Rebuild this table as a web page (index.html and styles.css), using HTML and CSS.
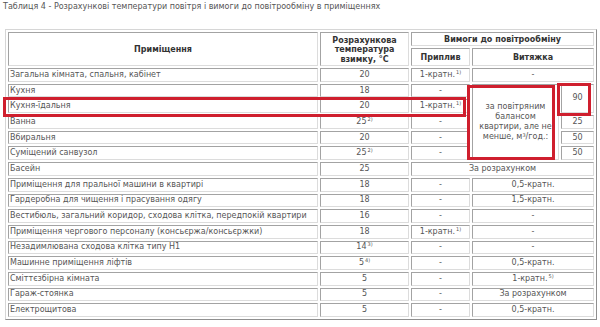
FILE: index.html
```html
<!DOCTYPE html>
<html lang="uk">
<head>
<meta charset="utf-8">
<link rel="stylesheet" href="styles.css">
</head>
<body>
<div class="page">
  <p class="caption">Таблиця 4 - Розрахункові температури повітря і вимоги до повітрообміну в приміщеннях</p>
  <table class="norms">
    <colgroup>
      <col class="c-room"><col class="c-temp"><col class="c-in"><col class="c-out1"><col class="c-out2">
    </colgroup>
    <thead>
      <tr class="h1">
        <th rowspan="2">Приміщення</th>
        <th rowspan="2" class="temp-head">Розрахункова температура взимку, °С</th>
        <th colspan="3">Вимоги до повітрообміну</th>
      </tr>
      <tr class="h2">
        <th>Приплив</th>
        <th colspan="2">Витяжка</th>
      </tr>
    </thead>
    <tbody>
      <tr><td class="name">Загальна кімната, спальня, кабінет</td><td>20</td><td>1-кратн.<sup>1)</sup></td><td colspan="2">-</td></tr>
      <tr><td class="name">Кухня</td><td>18</td><td>-</td><td rowspan="5" class="balance"><span class="ln">за повітряним</span><span class="ln">балансом</span><span class="ln">квартири, але не</span><span class="ln">менше, м<sup>3</sup>/год.:</span></td><td rowspan="2">90</td></tr>
      <tr><td class="name">Кухня-їдальня</td><td>20</td><td>1-кратн.<sup>1)</sup></td></tr>
      <tr><td class="name">Ванна</td><td>25<sup>2)</sup></td><td>-</td><td>25</td></tr>
      <tr><td class="name">Вбиральня</td><td>20</td><td>-</td><td>50</td></tr>
      <tr><td class="name">Суміщений санвузол</td><td>25<sup>2)</sup></td><td>-</td><td>50</td></tr>
      <tr><td class="name">Басейн</td><td>25</td><td colspan="3">За розрахунком</td></tr>
      <tr><td class="name">Приміщення для пральної машини в квартирі</td><td>18</td><td>-</td><td colspan="2">0,5-кратн.</td></tr>
      <tr><td class="name">Гардеробна для чищення і прасування одягу</td><td>18</td><td>-</td><td colspan="2">1,5-кратн.</td></tr>
      <tr><td class="name">Вестибюль, загальний коридор, сходова клітка, передпокій квартири</td><td>16</td><td>-</td><td colspan="2">-</td></tr>
      <tr><td class="name">Приміщення чергового персоналу (консьєржа/консьєржки)</td><td>18</td><td>1-кратн.<sup>1)</sup></td><td colspan="2">-</td></tr>
      <tr><td class="name">Незадимлювана сходова клітка типу Н1</td><td>14<sup>3)</sup></td><td>-</td><td colspan="2">-</td></tr>
      <tr><td class="name">Машинне приміщення ліфтів</td><td>5<sup>4)</sup></td><td>-</td><td colspan="2">0,5-кратн.</td></tr>
      <tr><td class="name">Сміттєзбірна кімната</td><td>5</td><td>-</td><td colspan="2">1-кратн.<sup>5)</sup></td></tr>
      <tr><td class="name">Гараж-стоянка</td><td>5</td><td>-</td><td colspan="2">За розрахунком</td></tr>
      <tr><td class="name">Електрощитова</td><td>5</td><td>-</td><td colspan="2">0,5-кратн.</td></tr>
    </tbody>
  </table>
  <div class="mark mark-row"></div>
  <div class="mark mark-balance"></div>
  <div class="mark mark-value"></div>
</div>
</body>
</html>
```
FILE: styles.css
```css
html, body {
  margin: 0;
  padding: 0;
  background: #ffffff;
}
.page {
  position: relative;
  width: 600px;
  height: 327px;
  padding: 2px 0 0 3px;
  box-sizing: border-box;
  font-family: "DejaVu Sans", Verdana, sans-serif;
  font-size: 8px;
  color: #555;
}
.caption {
  margin: 0 0 17px 0;
  line-height: 10px;
  color: #555;
}
.norms {
  margin-left: 2px;
  width: 588px;
  table-layout: fixed;
  border-collapse: separate;
  border-spacing: 2px;
  border: 1px solid;
  border-color: #d6d6d6 #8f8f8f #8f8f8f #d6d6d6;
}
.c-room { width: 310px; }
.c-temp { width: 89px; }
.c-in { width: 59px; }
.c-out1 { width: 87px; }
.c-out2 { width: 33px; }
.norms th, .norms td {
  border: 1px solid;
  border-color: #a3a3a3 #dcdcdc #dcdcdc #a3a3a3;
  padding: 0 2px;
  text-align: center;
  vertical-align: middle;
  white-space: nowrap;
  overflow: hidden;
}
.norms th {
  font-weight: bold;
  color: #333;
  line-height: 9px;
  white-space: normal;
}
.norms th.temp-head {
  line-height: 9.5px;
  padding: 2px 4px 0;
}
.h1 { height: 14px; }
.h2 { height: 18px; }
.norms tbody tr { height: 13.7px; }
.norms td {
  line-height: 10px;
}
.norms td.name {
  text-align: left;
  padding-left: 1px;
}
.norms td.balance {
  line-height: 9.8px;
  padding: 0 2px;
}
.norms td.balance .ln {
  display: block;
}
.norms sup {
  font-size: 5px;
  line-height: 0;
  vertical-align: 3px;
  margin-left: 1px;
}
.norms td.balance sup {
  margin: 0;
  vertical-align: 2px;
}
.mark {
  position: absolute;
  border: 3px solid #cf1f2e;
  box-sizing: border-box;
}
.mark-row { left: 3px; top: 97px; width: 463px; height: 20px; }
.mark-balance { left: 467px; top: 85px; width: 88px; height: 75px; }
.mark-value { left: 557px; top: 83px; width: 34px; height: 33px; }
```
